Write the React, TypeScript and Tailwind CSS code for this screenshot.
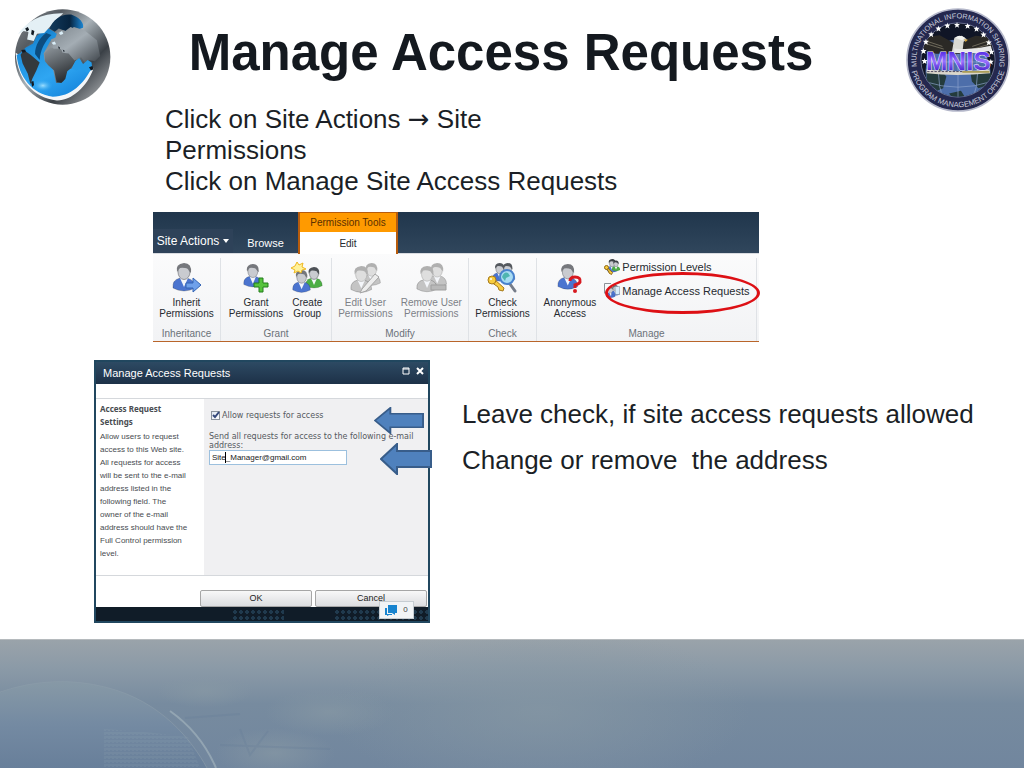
import React from 'react'

const GlobeLogo = () => (
  <svg viewBox="42 22 294 298" className="h-[98px] w-[98px] shrink-0" role="img" aria-label="Globe">
    <defs>
      <linearGradient id="steel" x1="0" y1="0" x2="1" y2="1">
        <stop offset="0" stopColor="#8d9398" />
        <stop offset="0.25" stopColor="#555b61" />
        <stop offset="0.45" stopColor="#a9b2b8" />
        <stop offset="0.68" stopColor="#3a4046" />
        <stop offset="0.85" stopColor="#85898d" />
        <stop offset="1" stopColor="#c3c5c8" />
      </linearGradient>
      <linearGradient id="ocean" x1="0" y1="0" x2="0.6" y2="1">
        <stop offset="0" stopColor="#0b5f9f" />
        <stop offset="0.3" stopColor="#1d8fdd" />
        <stop offset="0.7" stopColor="#2fa6f2" />
        <stop offset="1" stopColor="#1a8be0" />
      </linearGradient>
      <linearGradient id="deep" x1="0" y1="0" x2="1" y2="0">
        <stop offset="0" stopColor="#123a5c" />
        <stop offset="0.6" stopColor="#07243f" />
        <stop offset="1" stopColor="#1b86d4" />
      </linearGradient>
      <linearGradient id="land" x1="0" y1="0" x2="0.4" y2="1">
        <stop offset="0" stopColor="#8f979d" />
        <stop offset="1" stopColor="#2a2e32" />
      </linearGradient>
      <linearGradient id="eurasia" x1="0" y1="0" x2="1" y2="1">
        <stop offset="0" stopColor="#7c858c" />
        <stop offset="0.45" stopColor="#a4adb4" />
        <stop offset="1" stopColor="#3d4349" />
      </linearGradient>
      <radialGradient id="glow">
        <stop offset="0" stopColor="#9fdfff" />
        <stop offset="1" stopColor="#2fa6f2" stopOpacity="0" />
      </radialGradient>
    </defs>
    <circle cx="188" cy="171" r="145" fill="url(#steel)" />
    <path d="M45 158C50 240 100 296 170 303C215 304 262 262 282 206L262 200C240 260 190 292 150 288C100 280 62 240 56 165Z" fill="#f4f6f8" />
    <path d="M48 165C54 232 96 284 158 292C212 292 254 252 276 204L262 186L250 200L240 176L226 184L216 205L200 212L190 245L168 250L158 205L134 182L130 160L152 120L180 108L158 92L140 82L108 108L98 130L76 142L60 158Z" fill="url(#ocean)" />
    <ellipse cx="128" cy="258" rx="30" ry="18" fill="url(#glow)" />
    <path d="M52 102C78 62 126 36 190 38L168 58L150 78L132 98L110 100L100 122L80 118L84 96L70 92Z" fill="#e4f0f5" />
    <path d="M148 84C158 58 186 38 214 42C238 50 254 68 250 82L232 88L212 80L196 92L176 84L164 94Z" fill="url(#deep)" />
    <path d="M104 162C104 135 118 112 138 98L154 104C134 122 120 150 118 180Z" fill="#0c4d80" />
    <path d="M70 150L92 166L118 188L108 212L96 236L90 254L82 222L66 190L60 164Z" fill="#33393d" />
    <path d="M132 160L150 142L180 146L205 158L222 168L230 182L212 206L202 214L196 238L184 250L170 248L162 212L144 196L134 184Z" fill="url(#land)" />
    <path d="M152 118L166 112L172 96L188 90L206 94L222 80L254 90L292 120L302 168L286 184L268 180L256 190L244 172L224 182L206 160L188 158L182 144L160 146Z" fill="url(#eurasia)" />
    <path d="M216 206L226 184L238 174L250 192L264 180L276 188L278 208L262 220L244 206L230 212Z" fill="#249be9" />
    <path d="M74 84l8-4 4 8-7 6zM94 88l8 4-3 14-7-4zM62 150l12-2 2 8-10 2zM92 246l7-2 2 12-6 6zM174 138l6 5-3 5zM188 148l6 4-2 5zM268 202l10-4 4 10-8 4z" fill="#121a22" />
    <path d="M176 98l10-6 4 8-8 4zM154 128l10-4 4 8-8 2z" fill="#d9edf7" />
  </svg>
)

const STARS = [
  [86, 182], [83, 152], [90, 124], [106, 101], [128, 84], [155, 75], [184, 73],
  [216, 76], [243, 85], [264, 102], [280, 126], [288, 154], [286, 184],
]

const MnisSeal = () => (
  <svg viewBox="30 22 314 314" className="h-[104px] w-[104px] shrink-0" role="img" aria-label="MNIS seal">
    <defs>
      <path id="sealTop" d="M62 195A126 126 0 1 1 312 195" />
      <path id="sealBottom" d="M45 206A145 145 0 0 0 329 206" />
      <clipPath id="sealInner"><circle cx="187" cy="179" r="111" /></clipPath>
      <linearGradient id="mnis" x1="0" y1="0" x2="0" y2="1">
        <stop offset="0.1" stopColor="#4a1fe0" />
        <stop offset="0.5" stopColor="#9a72ff" />
        <stop offset="0.9" stopColor="#3d17c4" />
      </linearGradient>
    </defs>
    <circle cx="187" cy="179" r="154" fill="#24284f" stroke="#b5b8ca" strokeWidth="5" />
    <circle cx="187" cy="179" r="112" fill="#101526" stroke="#8e95b5" strokeWidth="2" />
    <g clipPath="url(#sealInner)">
      <circle cx="187" cy="215" r="98" fill="#4d6eaa" />
      <path d="M92 215l40-8 20 22-10 35-24 10-26-30zM225 220l30-10 34 10-10 34-30 10-20-20zM160 280l36-8 14 22-34 8z" fill="#243b3c" />
      <path d="M187 118v194M145 125q-35 90 0 180M229 125q35 90 0 180M90 245q97 32 194 0M90 185h194" fill="none" stroke="#8fa5cf" strokeWidth="2" />
      <path d="M66 112L132 104L178 130L240 106L310 112L286 148L226 160H120L84 145Z" fill="#2b2926" />
      <path d="M80 118l60 20M84 128l60 18M290 118l-60 20M286 130l-60 18" stroke="#6f6a5c" strokeWidth="3" />
      <path d="M168 158q6-34 8-46l22-6 16 10-10 8-4 34z" fill="#d9d9d4" />
      <path d="M178 112q12-12 30 0l-8 8z" fill="#f2f2ee" />
      <path d="M205 116l12 2-7 7z" fill="#d4a43c" />
    </g>
    <path d="M176 144Q230 150 286 136L290 150Q230 164 176 156Z" fill="#e8e8e8" />
    <path d="M92 208Q180 218 282 208L284 219Q180 230 92 219Z" fill="#d9d6cb" />
    <path d="M94 214H200" stroke="#514b61" strokeWidth="3" strokeDasharray="7 4" />
    <path d="M200 215H282" stroke="#998a30" strokeWidth="4" />
    {STARS.map(([x, y]) => (
      <path key={`${x}-${y}`} transform={`translate(${x} ${y})`} d="M0-9L2-3L9-3L4 2L6 9L0 5L-6 9L-4 2L-9-3L-2-3Z" fill="#fff" />
    ))}
    <text x="188" y="210" textAnchor="middle" fontSize="78" stroke="#f3eeff" strokeWidth="3" paintOrder="stroke" fill="url(#mnis)" className="font-['Liberation_Sans'] font-bold">MNIS</text>
    <text fontSize="22" fill="#c9ccdd" textAnchor="middle" className="font-['Liberation_Sans']">
      <textPath href="#sealTop" startOffset="50%">MULTINATIONAL INFORMATION SHARING</textPath>
    </text>
    <text fontSize="23" fill="#c9ccdd" textAnchor="middle" className="font-['Liberation_Sans']">
      <textPath href="#sealBottom" startOffset="50%">PROGRAM MANAGEMENT OFFICE</textPath>
    </text>
  </svg>
)

interface PersonProps {
  x?: number
  y?: number
  scale?: number
  body?: string
  hair?: string
  face?: string
}

const Person = ({ x = 0, y = 0, scale = 1, body = '#4b74cf', hair = '#75777c', face = '#c9cbd0' }: PersonProps) => (
  <g transform={`translate(${x} ${y}) scale(${scale})`}>
    <path d="M1 25Q0 17 8 15H15Q23 17 23 25Q12 31 1 25Z" fill={body} stroke="#0003" />
    <path d="M8 15L12 24L16 15Z" fill="#f4f6fa" />
    <ellipse cx="12" cy="9" rx="6" ry="7.5" fill={face} stroke={hair} strokeWidth="0.7" />
    <path d="M5 9Q3 1 12 0Q20 0 19 10L17 8Q16 5 13 5Q8 4 7 6Z" fill={hair} />
  </g>
)

const GREY = { body: '#c4c4c4', hair: '#b0b0b0', face: '#dedede' }

const InheritIcon = () => (
  <>
    <Person x={1} y={1} />
    <path d="M15 21H22V16L30 23L22 30V26H15Z" fill="#6fa0ea" stroke="#3564b4" />
  </>
)

const GrantIcon = () => (
  <>
    <Person x={3} y={2} scale={0.82} />
    <path d="M19 16H23V21H28V25H23V30H19V25H14V21H19Z" fill="#56c33c" stroke="#237d1c" />
  </>
)

const CreateIcon = () => (
  <>
    <Person x={14} y={5} scale={0.75} body="#4cae45" hair="#4e5257" />
    <Person x={1} y={8} scale={0.8} />
    <path d="M6 0L8 3L12 1L11 5L15 7L11 8L10 11L7 9L3 11L4 8L0 6L4 4Z" fill="#fff29a" stroke="#efb820" />
  </>
)

const EditUserIcon = () => (
  <>
    <Person x={13} y={1} scale={0.8} {...GREY} />
    <Person x={1} y={4} scale={0.94} {...GREY} />
    <path d="M13 27L26 12L30 15L17 29L11 31Z" fill="#ededed" stroke="#a5a5a5" />
  </>
)

const RemoveUserIcon = () => (
  <>
    <Person x={12} y={1} scale={0.85} {...GREY} />
    <Person x={1} y={4} scale={0.92} {...GREY} />
    <path d="M16 23H31V28H16Z" fill="#b9b9b9" stroke="#9f9f9f" />
  </>
)

const CheckIcon = () => (
  <>
    <Person x={5} y={1} scale={0.65} hair="#54585e" />
    <Person x={13} y={1} scale={0.65} hair="#54585e" />
    <path d="M23 22L28 29" stroke="#777d89" strokeWidth="3" strokeLinecap="round" />
    <circle cx="20" cy="15" r="7" fill="#a9dcf3" stroke="#4a83cd" strokeWidth="2" />
    <path d="M15 15Q17 9 21 11L23 14L19 16L18 19Z" fill="#4fb5b0" />
    <path d="M7 17L17 26L16 29L12 28L11 25L4 20Z" fill="#f7cc3f" stroke="#a77a1b" />
    <circle cx="5" cy="18" r="4" fill="#f7cc3f" stroke="#a77a1b" />
    <circle cx="4" cy="17" r="1" fill="#fff" />
  </>
)

const AnonymousIcon = () => (
  <>
    <Person x={3} y={2} scale={0.9} />
    <path d="M16 19Q16 15 21 15Q27 15 26 20Q25 22 21 23V26" fill="none" stroke="#d71920" strokeWidth="3" />
    <circle cx="21" cy="29" r="2" fill="#d71920" />
  </>
)

const LevelsIcon = () => (
  <>
    <Person x={5} y={0} scale={0.95} hair="#3d4247" />
    <Person x={15} y={3} scale={0.75} body="#4cae45" hair="#3d4247" />
    <path d="M4 15L17 27L15 31L10 28L9 24L2 18Z" fill="#f7cc3f" stroke="#8e6715" strokeWidth="2" />
    <circle cx="5" cy="17" r="4" fill="#f7cc3f" stroke="#8e6715" strokeWidth="2" />
  </>
)

const RequestsIcon = () => (
  <>
    <path d="M1 21V1H14" fill="none" stroke="#8c9097" strokeWidth="2" />
    <Person x={4} y={7} scale={0.8} />
    <Person x={14} y={4} scale={0.75} hair="#64686d" />
    <path d="M22 7H31V23H23Z" fill="#d8edfa" stroke="#789" />
    <path d="M8 27L13 29" stroke="#d12f2f" strokeWidth="3" />
  </>
)

interface RibbonButtonProps {
  lines: [string, string]
  icon: React.ReactNode
  disabled?: boolean
}

const RibbonButton = ({ lines, icon, disabled }: RibbonButtonProps) => (
  <button type="button" disabled={disabled} className="flex flex-col items-center pt-1 text-[10px] leading-[11px] text-[#262a30] disabled:text-[#7d8187]">
    <svg viewBox="0 0 32 32" className="mb-[3px] h-8 w-8" aria-hidden="true">{icon}</svg>
    <span className="whitespace-nowrap">{lines[0]}<br />{lines[1]}</span>
  </button>
)

const SmallButton = ({ label, icon }: { label: string; icon: React.ReactNode }) => (
  <button type="button" className="flex h-4 items-center gap-0.5 whitespace-nowrap text-[11px] text-[#262a30]">
    <svg viewBox="0 0 32 32" className="h-4 w-4" aria-hidden="true">{icon}</svg>
    {label}
  </button>
)

const RibbonGroup = ({ title, children }: { title: string; children: React.ReactNode }) => (
  <section className="flex flex-col justify-between border-r border-[#dfe2e6] pb-px">
    <div className="flex justify-center gap-2">{children}</div>
    <h2 className="text-center text-[10px] leading-3 text-[#6b7178]">{title}</h2>
  </section>
)

const Ribbon = () => (
  <div className="relative w-[606px] border-b border-[#b9652a] bg-linear-to-b from-white to-[#f2f3f5]">
    <nav className="flex h-[42px] items-end border-b border-[#d8dbe0] bg-linear-to-b from-[#20364c] to-[#30465c] text-[11px] text-white">
      <button type="button" className="flex h-6 w-20 items-center justify-center gap-1 whitespace-nowrap bg-[#2e4259] text-[12px]">
        Site Actions
        <svg viewBox="0 0 6 4" className="h-1 w-1.5" aria-hidden="true"><path d="M0 0H6L3 4Z" fill="#fff" /></svg>
      </button>
      <button type="button" className="h-5 w-[65px]">Browse</button>
      <div className="-mb-px flex h-[42px] w-[100px] flex-col border-x-2 border-t border-[#b85c0c] bg-white text-center text-[10px] text-[#262a30]">
        <span className="h-[19px] bg-[#ff9a00] leading-[19px] text-[#5a3000]">Permission Tools</span>
        <button type="button" className="flex-1">Edit</button>
      </div>
    </nav>
    <div className="grid h-[87px] grid-cols-[68px_111px_137px_68px_1fr] pt-1 pr-0.5">
      <RibbonGroup title="Inheritance">
        <RibbonButton lines={['Inherit', 'Permissions']} icon={<InheritIcon />} />
      </RibbonGroup>
      <RibbonGroup title="Grant">
        <RibbonButton lines={['Grant', 'Permissions']} icon={<GrantIcon />} />
        <RibbonButton lines={['Create', 'Group']} icon={<CreateIcon />} />
      </RibbonGroup>
      <RibbonGroup title="Modify">
        <RibbonButton disabled lines={['Edit User', 'Permissions']} icon={<EditUserIcon />} />
        <RibbonButton disabled lines={['Remove User', 'Permissions']} icon={<RemoveUserIcon />} />
      </RibbonGroup>
      <RibbonGroup title="Check">
        <RibbonButton lines={['Check', 'Permissions']} icon={<CheckIcon />} />
      </RibbonGroup>
      <RibbonGroup title="Manage">
        <RibbonButton lines={['Anonymous', 'Access']} icon={<AnonymousIcon />} />
        <div className="flex flex-col gap-2 pt-px">
          <SmallButton label="Permission Levels" icon={<LevelsIcon />} />
          <SmallButton label="Manage Access Requests" icon={<RequestsIcon />} />
        </div>
      </RibbonGroup>
    </div>
    <div className="pointer-events-none absolute top-[60px] -right-px h-[42px] w-[155px] rounded-[50%] border-3 border-[#dd1015]" />
  </div>
)

const Arrow = ({ className }: { className: string }) => (
  <svg viewBox="0 0 52 32" preserveAspectRatio="none" className={className} aria-hidden="true">
    <path d="M1 16L17 1V8H51V24H17V31Z" fill="#4f81bd" stroke="#385d8a" strokeWidth="2" />
  </svg>
)

const AccessDialog = () => (
  <div className="relative w-[336px] shrink-0 border-2 border-[#21475f] bg-white">
    <header className="flex h-[22px] items-center justify-between bg-linear-to-b from-[#2d4a63] to-[#1d3148] pr-1 pl-[7px] text-white">
      <h2 className="text-[11px]">Manage Access Requests</h2>
      <div className="flex gap-1.5 pb-1">
        <button type="button" aria-label="Maximize">
          <svg viewBox="0 0 8 8" className="h-2 w-2"><path d="M1 1H7V7H1ZM1 2H7" fill="none" stroke="#fff" /></svg>
        </button>
        <button type="button" aria-label="Close">
          <svg viewBox="0 0 8 8" className="h-2 w-2"><path d="M1 1L7 7M7 1L1 7" stroke="#fff" strokeWidth="2" /></svg>
        </button>
      </div>
    </header>
    <div className="mt-[14px] grid h-[178px] grid-cols-[108px_1fr] border-y border-[#d5d8dc]">
      <div className="pt-[3px] pl-1 text-[8px] leading-[13px] text-[#484c50]">
        <h3 className="mb-0.5 w-20 font-['Noto_Sans'] font-bold">Access Request<br />Settings</h3>
        <p className="whitespace-nowrap">
          Allow users to request<br />
          access to this Web site.<br />
          All requests for access<br />
          will be sent to the e-mail<br />
          address listed in the<br />
          following field. The<br />
          owner of the e-mail<br />
          address should have the<br />
          Full Control permission<br />
          level.
        </p>
      </div>
      <div className="bg-[#f0f0f2] pt-3 pl-[5px] font-['DejaVu_Sans'] text-[8px] leading-[9px] text-[#55595e]">
        <label className="flex items-center gap-0.5 pl-0.5">
          <input type="checkbox" defaultChecked className="h-[9px] w-[9px] appearance-none border border-[#8b939c] bg-white checked:bg-[linear-gradient(135deg,#dfe7f1,#fff)]" />
          Allow requests for access
        </label>
        <label htmlFor="email" className="mt-3 block w-[205px]">Send all requests for access to the following e-mail address:</label>
        <div className="relative w-[138px]">
          <input id="email" type="text" defaultValue="Site_Manager@gmail.com" className="block h-[15px] w-full border border-[#9cc0de] bg-white px-0.5 font-['Liberation_Sans'] text-[8px] text-[#222]" />
          <span className="absolute top-0.5 left-4 h-[11px] w-px bg-black" />
        </div>
      </div>
    </div>
    <div className="mt-[14px] flex justify-end gap-[3px] pr-px text-[9px] text-[#222]">
      <button type="button" className="h-[17px] w-28 rounded-xs border border-[#a6a6a6] bg-linear-to-b from-[#f8f8f8] to-[#dcdde0]">OK</button>
      <button type="button" className="h-[17px] w-28 rounded-xs border border-[#a6a6a6] bg-linear-to-b from-[#f8f8f8] to-[#dcdde0]">Cancel</button>
    </div>
    <div className="h-[14px] bg-[#101c28] pt-0.5">
      <div className="ml-[136px] flex h-3 gap-[50px]">
        <div className="w-[52px] bg-[radial-gradient(#203a4e_2px,transparent_2px)] bg-size-[6px_6px]" />
        <div className="flex-1 bg-[radial-gradient(#203a4e_2px,transparent_2px)] bg-size-[6px_6px]" />
      </div>
    </div>
    <div className="absolute right-3.5 bottom-0.5 flex h-[18px] w-[35px] items-center justify-center gap-1.5 border border-[#c6cdd2] bg-[#f1f4f6] text-[8px] text-[#444]">
      <svg viewBox="0 0 12 12" className="h-3 w-3" aria-hidden="true">
        <path d="M3 1H12V9H10V11L7 9H3Z" fill="#1784cf" />
        <path d="M0 4H2V10H7V11H4L2 12V11H0Z" fill="#1784cf" />
      </svg>
      0
    </div>
    <Arrow className="absolute top-[45px] left-[278px] h-[27px] w-[50px]" />
    <Arrow className="absolute top-[81px] left-[284px] h-[32px] w-[52px]" />
    <svg viewBox="0 0 8 8" className="pointer-events-none absolute top-[49px] left-[116px] h-2 w-2" aria-hidden="true">
      <path d="M1 4L3 6L7 1" fill="none" stroke="#34487a" strokeWidth="2" />
    </svg>
  </div>
)

const EarthBackdrop = () => (
  <svg viewBox="0 0 1024 128" preserveAspectRatio="none" className="h-full w-full" aria-hidden="true">
    <defs>
      <linearGradient id="sky" x1="0" y1="0" x2="0" y2="1">
        <stop offset="0" stopColor="#9aa3aa" />
        <stop offset="0.22" stopColor="#8b9aa7" />
        <stop offset="0.5" stopColor="#778b9f" />
        <stop offset="1" stopColor="#71869e" />
      </linearGradient>
      <radialGradient id="haze">
        <stop offset="0" stopColor="#8798a4" stopOpacity="0.7" />
        <stop offset="1" stopColor="#8798a4" stopOpacity="0" />
      </radialGradient>
      <linearGradient id="planet" x1="0" y1="0" x2="0" y2="1">
        <stop offset="0" stopColor="#8799a6" />
        <stop offset="0.5" stopColor="#748aa2" />
        <stop offset="1" stopColor="#687f9a" />
      </linearGradient>
      <pattern id="cities" width="4" height="4" patternUnits="userSpaceOnUse">
        <path d="M1 0V3M2 1H4" stroke="#96a9b5" strokeWidth="0.6" />
      </pattern>
    </defs>
    <rect width="1024" height="128" fill="url(#sky)" />
    <ellipse cx="540" cy="70" rx="210" ry="85" fill="url(#haze)" />
    <ellipse cx="205" cy="51" rx="48" ry="17" fill="url(#haze)" />
    <ellipse cx="330" cy="72" rx="65" ry="24" fill="url(#haze)" />
    <ellipse cx="275" cy="113" rx="60" ry="25" fill="url(#haze)" />
    <path d="M0 52Q53 34 105 47C162 61 192 101 207 128H0Z" fill="url(#planet)" />
    <path d="M0 52Q53 34 105 47C162 61 192 101 207 128" fill="none" stroke="#8c9daa" strokeOpacity="0.6" />
    <path d="M170 71Q201 93 216 128" fill="none" stroke="#a0b0ba" strokeOpacity="0.7" strokeWidth="2" />
    <path d="M104 89L145 92L188 97L200 128H104Z" fill="url(#cities)" opacity="0.45" />
    <path d="M185 78L240 74M220 105L330 109M240 89L250 115L268 91" fill="none" stroke="#687f99" strokeOpacity="0.3" strokeWidth="2" />
  </svg>
)

const App: React.FC = () => {
  return (
    <div className="flex min-h-screen flex-col bg-white font-['Liberation_Sans',sans-serif] text-[#1b1f26]">
      <header className="flex h-26 items-start justify-between px-3.5 pt-2">
        <GlobeLogo />
        <h1 className="mr-4 pt-[15px] text-[51px] leading-[60px] font-bold text-[#14191f]">Manage Access Requests</h1>
        <MnisSeal />
      </header>
      <main className="flex-1 pb-4">
        <div className="ml-[165px] text-[26px] leading-[31px]">
          <p>Click on Site Actions <span className="font-['DejaVu_Sans']">→</span> Site<br />Permissions</p>
          <p>Click on Manage Site Access Requests</p>
        </div>
        <div className="mt-[15px] ml-[153px]">
          <Ribbon />
        </div>
        <div className="mt-[18px] ml-[94px] flex gap-8">
          <AccessDialog />
          <div className="flex flex-col gap-[15px] pt-[39px] text-[26px] leading-[31px] whitespace-pre">
            <p>Leave check, if site access requests allowed</p>
            <p>Change or remove  the address</p>
          </div>
        </div>
      </main>
      <footer className="h-[129px] border-t border-[#b5babd]">
        <EarthBackdrop />
      </footer>
    </div>
  )
}

export default App
